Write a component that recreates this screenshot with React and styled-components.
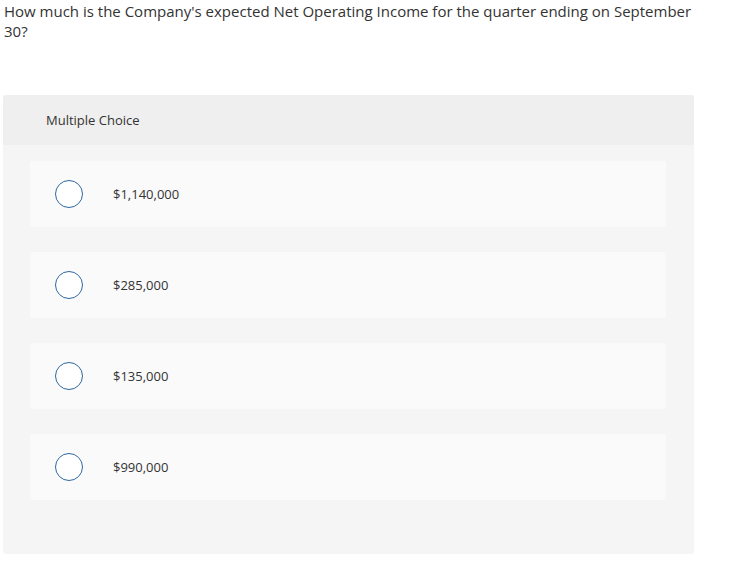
import React from "react";
import styled, { createGlobalStyle } from "styled-components";

const GlobalStyle = createGlobalStyle`
  html, body {
    margin: 0;
    padding: 0;
    background: #ffffff;
  }
  body {
    font-family: "Open Sans", Arial, sans-serif;
    color: #333333;
  }
`;

const Page = styled.div`
  width: 730px;
  padding: 0 3px;
  box-sizing: border-box;
`;

const Question = styled.p`
  margin: 0;
  padding: 1px 1px 0;
  font-size: 15px;
  line-height: 20px;
  width: 692px;
  color: #333333;
`;

const Panel = styled.section`
  margin-top: 54px;
  width: 691px;
  background: #f5f5f5;
  border-radius: 3px;
  overflow: hidden;
`;

const PanelHeader = styled.div`
  height: 50px;
  background: #efefef;
  display: flex;
  align-items: center;
  padding-left: 43px;
  font-size: 13px;
  color: #333333;
`;

const Choices = styled.div`
  display: flex;
  flex-direction: column;
  gap: 25px;
  padding: 16px 28px 54px 27px;
`;

const Choice = styled.label`
  display: flex;
  align-items: center;
  height: 66px;
  background: #fafafa;
  border-radius: 3px;
  padding-left: 25px;
  cursor: pointer;
`;

const Radio = styled.span`
  width: 26px;
  height: 26px;
  border: 1.5px solid #2f67a0;
  border-radius: 50%;
  background: #ffffff;
  flex-shrink: 0;
`;

const ChoiceText = styled.span`
  margin-left: 30px;
  font-size: 13px;
  color: #333333;
`;

const options = ["$1,140,000", "$285,000", "$135,000", "$990,000"];

export default function App() {
  return (
    <Page>
      <GlobalStyle />
      <Question>
        How much is the Company's expected Net Operating Income for the quarter ending on September 30?
      </Question>
      <Panel>
        <PanelHeader>Multiple Choice</PanelHeader>
        <Choices>
          {options.map((o) => (
            <Choice key={o}>
              <Radio />
              <ChoiceText>{o}</ChoiceText>
            </Choice>
          ))}
        </Choices>
      </Panel>
    </Page>
  );
}
